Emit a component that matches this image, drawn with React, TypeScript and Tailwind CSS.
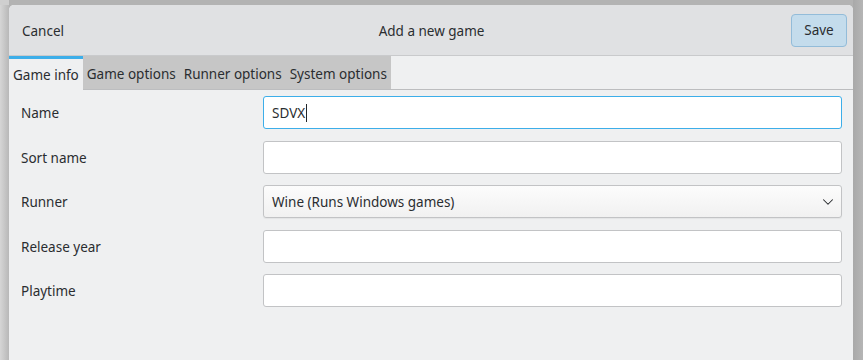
import { ChevronDown } from "lucide-react"

const rows = ["Name", "Sort name", "Runner", "Release year", "Playtime"]
const tabs = ["Game info", "Game options", "Runner options", "System options"]

function Field({ label }: { label: string }) {
  if (label === "Name") {
    return (
      <div className="flex h-[33px] w-[579px] items-center rounded-[3px] border border-[#3daee9] bg-white pl-[8px] pt-[1px]">
        <span>SDVX</span>
        <span className="ml-[1px] h-[18px] w-px bg-[#232629]" />
      </div>
    )
  }
  if (label === "Runner") {
    return (
      <div className="flex h-[33px] w-[579px] items-center justify-between rounded-[3px] border border-[#c2c3c5] bg-gradient-to-b from-[#fcfcfc] to-[#f1f1f1] pl-[8px] pr-[4px] pt-[1px] shadow-[0_1px_1px_rgba(0,0,0,0.05)]">
        <span>Wine (Runs Windows games)</span>
        <ChevronDown size={18} strokeWidth={1.4} className="text-[#232629]" />
      </div>
    )
  }
  return <div className="h-[33px] w-[579px] rounded-[3px] border border-[#c2c3c5] bg-white" />
}

export default function App() {
  return (
    <div
      className="flex h-[360px] w-[863px] overflow-hidden bg-[#b3b3b3] text-[13.5px] text-[#2a2d30]"
      style={{ fontFamily: '"Noto Sans", "Open Sans", sans-serif' }}
    >
      {/* left shadow strip */}
      <div className="flex w-[9px] flex-col">
        <div className="h-[5px] bg-[#cfcfcf]" />
        <div className="flex-1 bg-gradient-to-r from-[#d6d6d6] to-[#b8b8b8]" />
      </div>

      <div className="flex flex-1 flex-col pt-[5px]">
        <div className="flex flex-1 flex-col overflow-hidden rounded-t-[5px] bg-[#eff0f1]">
          {/* header */}
          <div className="flex h-[51px] items-center justify-between border-b border-[#c9cacc] bg-[#e0e1e3] pl-[13px] pr-[6px] pt-[2px]">
            <span>Cancel</span>
            <span className="pl-[8px]">Add a new game</span>
            <button className="-mt-[2px] h-[33px] w-[56px] rounded-[4px] border border-[#93bcd9] bg-[#c4dcec] pt-[1px]">Save</button>
          </div>

          {/* tabs */}
          <div className="flex h-[34px] items-stretch border-b border-[#bcbdbf]">
            {tabs.map((t, i) =>
              i === 0 ? (
                <div key={t} className="-mb-px flex items-center border-t-[3px] border-[#3daee9] bg-[#eff0f1] px-[4px] pt-[1px]">
                  {t}
                </div>
              ) : (
                <div key={t} className="flex items-center bg-[#c6c6c6] px-[4px] pt-[4px]">
                  {t}
                </div>
              )
            )}
          </div>

          {/* form */}
          <div className="flex flex-col gap-[11.5px] pl-[12px] pr-[11px] pt-[6px]">
            {rows.map((r) => (
              <div key={r} className="flex items-center justify-between">
                <span className="pt-[2px]">{r}</span>
                <Field label={r} />
              </div>
            ))}
          </div>
        </div>
      </div>

      {/* right shadow strip */}
      <div className="w-[10px] bg-gradient-to-r from-[#a9a9a9] to-[#b5b5b5]" />
    </div>
  )
}
